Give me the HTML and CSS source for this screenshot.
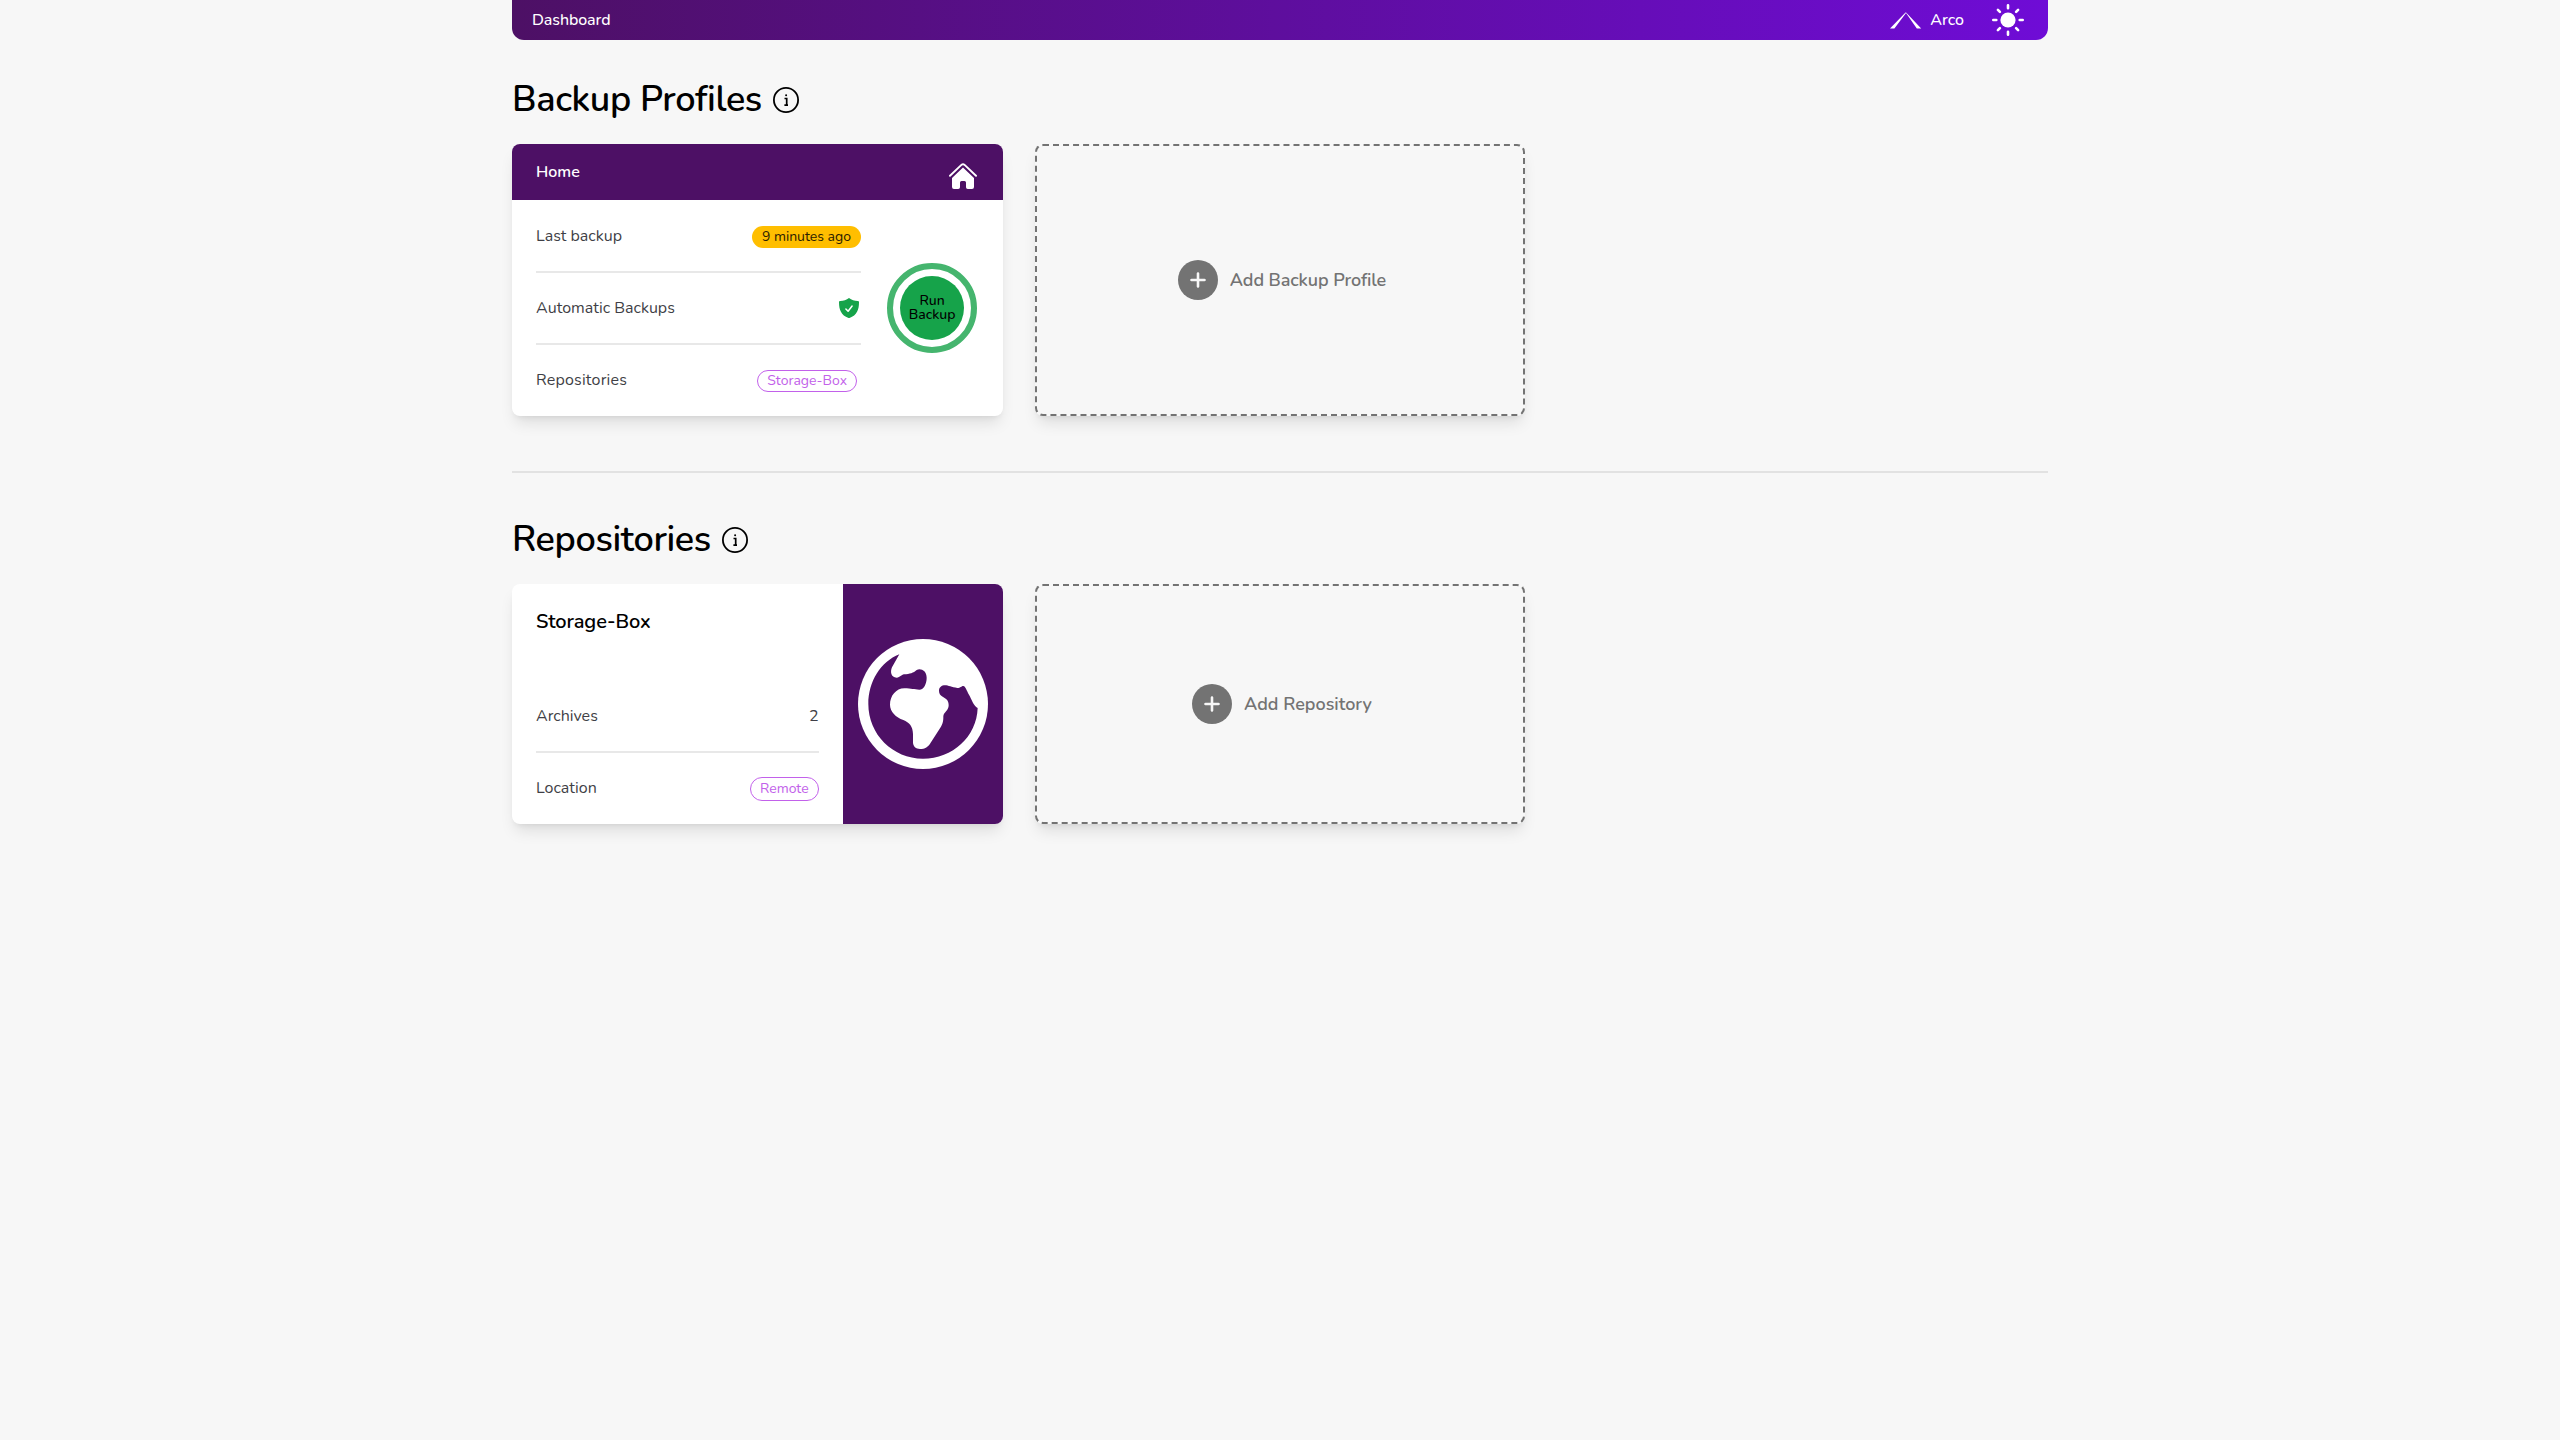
FILE: index.html
```html
<!DOCTYPE html>
<html lang="en">
<head>
<meta charset="utf-8">
<title>Arco</title>
<link rel="stylesheet" href="styles.css">
</head>
<body>
<div class="container">
  <header class="navbar">
    <a class="nav-link">Dashboard</a>
    <div class="nav-right">
      <div class="brand">
        <svg class="logo" viewBox="0 0 32 17"><path d="M15.500 .4h.6L31.200 16.500h-4.400L16 1 4.400 16.500H0z" fill="#fff"/></svg>
        <span>Arco</span>
      </div>
      <svg class="sun" viewBox="0 0 32 32" fill="#fff" stroke="#fff" stroke-width="2.6" stroke-linecap="round">
        <circle cx="16" cy="16" r="7.6" stroke="none"/>
        <path d="M16 1.3v3M16 27.7v3M1.3 16h3M27.7 16h3M5.9 5.9l2 2M24.1 24.1l2 2M5.9 26.1l2-2M24.1 7.9l2-2"/>
      </svg>
    </div>
  </header>

  <main>
    <div class="section-title">
      <h1>Backup Profiles</h1>
      <svg class="info" viewBox="0 0 26 26"><circle cx="13" cy="13" r="12.1" fill="none" stroke="#000" stroke-width="1.8"/><circle cx="13.1" cy="8.3" r="1" /><path d="M11.5 11.5h2.2v6.3M11.4 18.2h3.6" fill="none" stroke="#000" stroke-width="1.7"/></svg>
    </div>
    <section class="grid profiles">
      <article class="card profile">
        <div class="profile-head">
          <h2>Home</h2>
          <svg class="home" viewBox="0 0 28 26" fill="#fff"><path d="M1 12.8 12.4 1.9q1.6-1.5 3.2 0L27 12.8" fill="none" stroke="#fff" stroke-width="1.9" stroke-linecap="round"/><path d="M14 4.6 25 15v9q0 2-2 2h-4.2q-1.8 0-1.8-1.8V19.500q0-1.500-1.500-1.500h-3q-1.500 0-1.500 1.500v4.700Q11 26 9.200 26H5q-2 0-2-2v-9z"/></svg>
        </div>
        <div class="profile-body">
          <div class="rows">
            <div class="row"><span>Last backup</span><span class="badge warning">9 minutes ago</span></div>
            <div class="row"><span>Automatic Backups</span>
              <svg class="shield" viewBox="0 0 20 20"><path d="M10 0c2.600 1.900 5.400 2.900 8.800 3.100.6 0 1.200.5 1.200 1.200C20 11.500 18 17.500 10.500 19.900q-.5.200-1 0C2 17.500 0 11.500 0 4.300 0 3.600.5 3.100 1.200 3.100 4.600 2.900 7.400 1.900 10 0z" fill="#16a34a"/><path d="M6.900 11l2.200 2.300 4-5.300" fill="none" stroke="#fff" stroke-width="1.500" stroke-linecap="round" stroke-linejoin="round"/></svg>
            </div>
            <div class="row"><span class="loose">Repositories</span><span class="badge outline gap-right">Storage-Box</span></div>
          </div>
          <div class="ring"><button class="run">Run Backup</button></div>
        </div>
      </article>
      <article class="card add">
        <span class="plus"><svg viewBox="0 0 16 16"><path d="M8 1.500v13M1.500 8h13" stroke="#f7f7f7" stroke-width="2.600" stroke-linecap="round"/></svg></span>
        <span class="tight">Add Backup Profile</span>
      </article>
    </section>

    <hr class="divider">

    <div class="section-title">
      <h1>Repositories</h1>
      <svg class="info" viewBox="0 0 26 26"><circle cx="13" cy="13" r="12.1" fill="none" stroke="#000" stroke-width="1.8"/><circle cx="13.1" cy="8.3" r="1" /><path d="M11.5 11.5h2.2v6.3M11.4 18.2h3.6" fill="none" stroke="#000" stroke-width="1.7"/></svg>
    </div>
    <section class="grid repos">
      <article class="card repo">
        <div class="repo-info">
          <h2>Storage-Box</h2>
          <div class="rows">
            <div class="row"><span>Archives</span><span>2</span></div>
            <div class="row"><span>Location</span><span class="badge outline tall">Remote</span></div>
          </div>
        </div>
        <div class="repo-icon">
          <svg class="globe" viewBox="84 177 390 390"><circle cx="279" cy="372" r="195" fill="#fff"/><path fill="#4d1065" d="M208 223L186 262C180 275 183 293 200 293C210 293 214 284 222 283C240 282 250 279 260 270C272 264 290 272 290 293C290 310 282 329 268 329C252 329 245 325 223 325C198 325 180 348 180 374C180 395 198 412 220 420C238 427 249 440 249 462L249 487C249 500 258 507 270 507C285 507 295 500 302 488L330 445C340 430 340 420 340 408C342 396 356 392 356 376C356 360 348 356 338 350C330 345 327 340 327 332C327 322 335 316 345 316C355 316 365 322 382 324C392 324 394 318 400 318C406 318 410 332 417 344C425 358 430 376 443 384C440 470 368 536 279 536C188 536 115 463 115 372C115 305 152 245 208 223Z"/></svg>
        </div>
      </article>
      <article class="card add">
        <span class="plus"><svg viewBox="0 0 16 16"><path d="M8 1.500v13M1.500 8h13" stroke="#f7f7f7" stroke-width="2.600" stroke-linecap="round"/></svg></span>
        <span>Add Repository</span>
      </article>
    </section>
  </main>
</div>
</body>
</html>
```

FILE: styles.css
```css
* { box-sizing: border-box; }
body {
  margin: 0;
  min-height: 100vh;
  background: #f7f7f7;
  color: #000;
  font: 400 16px/24px Nunito, Lato, sans-serif;
}
h1, h2 { margin: 0; }
svg { display: block; flex: none; }
.container { width: 1536px; margin: 0 auto; }

.navbar {
  height: 40px;
  padding: 0 24px 0 20px;
  display: flex;
  align-items: center;
  justify-content: space-between;
  border-radius: 0 0 12px 12px;
  background: linear-gradient(to right, #4d1065, #6f0cd6);
  color: #fff;
  font-weight: 500;
}
.nav-link { letter-spacing: -.1px; }
.nav-right { display: flex; align-items: center; gap: 28px; }
.brand { display: flex; align-items: center; gap: 8px; }
.logo { width: 32px; height: 17px; }
.sun { width: 32px; height: 32px; }

.section-title { display: flex; align-items: center; gap: 11px; }
.section-title h1 {
  font-size: 36px;
  line-height: 40px;
  font-weight: 600;
  letter-spacing: -.37px;
}
.info { width: 26px; height: 26px; }
main { padding-top: 40px; }

.grid {
  display: grid;
  grid-template-columns: repeat(3, 1fr);
  gap: 32px;
  margin-top: 24px;
}
.profiles { grid-auto-rows: 272px; }
.repos { grid-auto-rows: 240px; }
.card {
  border-radius: 8px;
  background: #fff;
  box-shadow: 0 10px 15px -3px rgba(0, 0, 0, .1), 0 4px 6px -4px rgba(0, 0, 0, .1);
  overflow: hidden;
}

.profile-head {
  height: 56px;
  padding: 0 26px 0 24px;
  display: flex;
  align-items: center;
  justify-content: space-between;
  background: #4d1065;
  color: #fff;
}
.profile-head h2 { font-size: 16px; font-weight: 600; }
.home { width: 28px; height: 26px; margin-top: 8px; }
.profile-body { display: flex; align-items: center; padding: 0 25.6px 0 24px; justify-content: space-between; }
.rows { color: #3f3f46; }
.profile-body .rows { width: 325px; }
.row { height: 72px; display: flex; align-items: center; justify-content: space-between; }
.row:not(:last-child) { border-bottom: 2px solid #e8e8e8; }
.row:first-child { height: 73px; padding-top: 1px; }
.row:last-child { height: 71px; padding-bottom: 1px; }
.shield { width: 20px; height: 20px; margin-right: 2px; }

.badge {
  height: 22px;
  margin-top: 2px;
  padding: 0 10px;
  display: flex;
  align-items: center;
  border-radius: 12px;
  font-size: 14px;
  line-height: 20px;
}
.warning { background: #ffbe00; color: #2b2000; }
.outline { padding: 0 9px; border: 1px solid #c261ea; color: #c261ea; }
.gap-right { margin-right: 4px; }
.tall { height: 24px; }
.loose { letter-spacing: .2px; }
.tight { letter-spacing: -.1px; }

.ring {
  width: 90px;
  height: 90px;
  display: flex;
  align-items: center;
  justify-content: center;
  border: 6px solid #45b56e;
  border-radius: 50%;
}
.run {
  width: 64px;
  height: 64px;
  padding: 0;
  border: 0;
  border-radius: 50%;
  background: #16a34a;
  color: #000;
  font: 500 14px/14px Nunito, Lato, sans-serif;
}

.add {
  padding-left: 4px;
  display: flex;
  align-items: center;
  justify-content: center;
  gap: 12px;
  border: 2px dashed #737373;
  background: #f7f7f7;
  color: #737373;
  font-size: 18px;
  line-height: 28px;
  font-weight: 600;
}
.plus {
  width: 40px;
  height: 40px;
  display: flex;
  align-items: center;
  justify-content: center;
  border-radius: 50%;
  background: #737373;
}
.plus svg { width: 16px; height: 16px; }

.divider { height: 2px; margin: 55px 0 47px; border: 0; background: #e2e2e2; }

.repo { display: flex; }
.repo-info {
  flex: 1;
  padding: 24px 24px 0;
  display: flex;
  flex-direction: column;
  justify-content: space-between;
}
.repo-info h2 { font-size: 20px; line-height: 28px; font-weight: 600; letter-spacing: -.12px; }
.repo-icon {
  width: 160px;
  display: flex;
  align-items: center;
  justify-content: center;
  background: #4d1065;
}
.globe { width: 130px; height: 130px; }
```
